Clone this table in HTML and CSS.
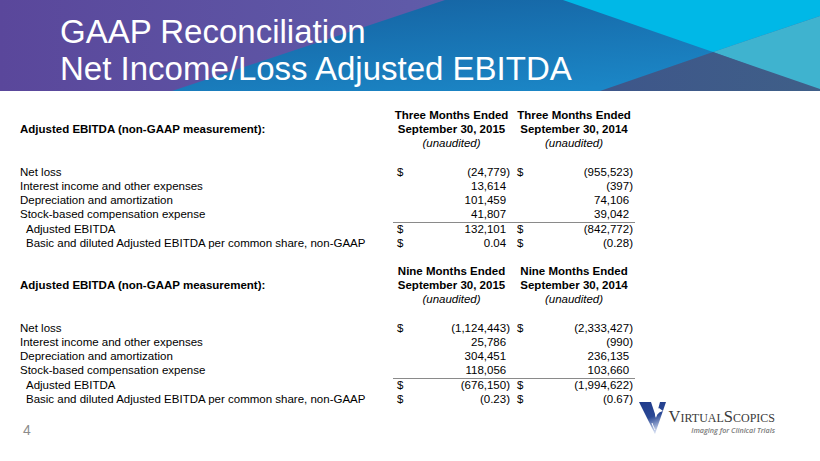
FILE: index.html
```html
<!DOCTYPE html>
<html lang="en">
<head>
<meta charset="utf-8">
<title>GAAP Reconciliation</title>
<link rel="stylesheet" href="styles.css">
</head>
<body>
<div class="slide">
  <header class="banner">
    <svg class="banner-bg" width="820" height="91" viewBox="0 0 820 91" preserveAspectRatio="none" aria-hidden="true">
      <defs>
        <linearGradient id="gPurple" x1="0" y1="0" x2="1" y2="0">
          <stop offset="0" stop-color="#5a479b"/>
          <stop offset="0.5" stop-color="#5f5aa8"/>
          <stop offset="1" stop-color="#6673b8"/>
        </linearGradient>
        <linearGradient id="gBlue" x1="0" y1="0" x2="0.6" y2="1">
          <stop offset="0" stop-color="#15609f"/>
          <stop offset="1" stop-color="#1b86c6"/>
        </linearGradient>
        <linearGradient id="gSlate" x1="0" y1="0" x2="1" y2="0">
          <stop offset="0" stop-color="#3e568a"/>
          <stop offset="1" stop-color="#3f5f88"/>
        </linearGradient>
      </defs>
      <rect x="0" y="0" width="820" height="91" fill="url(#gPurple)"/>
      <polygon points="445,0 820,0 820,91 172,91" fill="url(#gBlue)"/>
      <polygon points="563,0 820,0 820,16 713,52" fill="#00b8e7"/>
      <polygon points="713,52 820,16 820,91" fill="#3fb3cf"/>
      <polygon points="600,91 713,52 820,89 820,91" fill="url(#gSlate)"/>
    </svg>
    <h1 class="title">GAAP Reconciliation<br>Net Income/Loss Adjusted EBITDA</h1>
  </header>

  <main class="report">
    <div class="row">
      <span class="label"></span>
      <span class="colhead span1 b">Three Months Ended</span>
      <span class="colhead span2 b">Three Months Ended</span>
    </div>
    <div class="row">
      <span class="label b">Adjusted EBITDA (non-GAAP measurement):</span>
      <span class="colhead span1 b">September 30, 2015</span>
      <span class="colhead span2 b">September 30, 2014</span>
    </div>
    <div class="row">
      <span class="label"></span>
      <span class="colhead span1 i">(unaudited)</span>
      <span class="colhead span2 i">(unaudited)</span>
    </div>
    <div class="row blank"></div>
    <div class="row">
      <span class="label">Net loss</span>
      <span class="dol1">$</span><span class="val1">(24,779)</span>
      <span class="dol2">$</span><span class="val2">(955,523)</span>
    </div>
    <div class="row">
      <span class="label">Interest income and other expenses</span>
      <span class="dol1"></span><span class="val1 pos">13,614</span>
      <span class="dol2"></span><span class="val2">(397)</span>
    </div>
    <div class="row">
      <span class="label">Depreciation and amortization</span>
      <span class="dol1"></span><span class="val1 pos">101,459</span>
      <span class="dol2"></span><span class="val2 pos">74,106</span>
    </div>
    <div class="row rule">
      <span class="label">Stock-based compensation expense</span>
      <span class="dol1"></span><span class="val1 pos">41,807</span>
      <span class="dol2"></span><span class="val2 pos">39,042</span>
    </div>
    <div class="row">
      <span class="label indent">Adjusted EBITDA</span>
      <span class="dol1">$</span><span class="val1 pos">132,101</span>
      <span class="dol2">$</span><span class="val2">(842,772)</span>
    </div>
    <div class="row">
      <span class="label indent">Basic and diluted Adjusted EBITDA per common share, non-GAAP</span>
      <span class="dol1">$</span><span class="val1 pos">0.04</span>
      <span class="dol2">$</span><span class="val2">(0.28)</span>
    </div>
    <div class="row blank"></div>
    <div class="row">
      <span class="label"></span>
      <span class="colhead span1 b">Nine Months Ended</span>
      <span class="colhead span2 b">Nine Months Ended</span>
    </div>
    <div class="row">
      <span class="label b">Adjusted EBITDA (non-GAAP measurement):</span>
      <span class="colhead span1 b">September 30, 2015</span>
      <span class="colhead span2 b">September 30, 2014</span>
    </div>
    <div class="row">
      <span class="label"></span>
      <span class="colhead span1 i">(unaudited)</span>
      <span class="colhead span2 i">(unaudited)</span>
    </div>
    <div class="row blank"></div>
    <div class="row">
      <span class="label">Net loss</span>
      <span class="dol1">$</span><span class="val1">(1,124,443)</span>
      <span class="dol2">$</span><span class="val2">(2,333,427)</span>
    </div>
    <div class="row">
      <span class="label">Interest income and other expenses</span>
      <span class="dol1"></span><span class="val1 pos">25,786</span>
      <span class="dol2"></span><span class="val2">(990)</span>
    </div>
    <div class="row">
      <span class="label">Depreciation and amortization</span>
      <span class="dol1"></span><span class="val1 pos">304,451</span>
      <span class="dol2"></span><span class="val2 pos">236,135</span>
    </div>
    <div class="row rule">
      <span class="label">Stock-based compensation expense</span>
      <span class="dol1"></span><span class="val1 pos">118,056</span>
      <span class="dol2"></span><span class="val2 pos">103,660</span>
    </div>
    <div class="row">
      <span class="label indent">Adjusted EBITDA</span>
      <span class="dol1">$</span><span class="val1">(676,150)</span>
      <span class="dol2">$</span><span class="val2">(1,994,622)</span>
    </div>
    <div class="row">
      <span class="label indent">Basic and diluted Adjusted EBITDA per common share, non-GAAP</span>
      <span class="dol1">$</span><span class="val1">(0.23)</span>
      <span class="dol2">$</span><span class="val2">(0.67)</span>
    </div>
  </main>

  <footer class="footer">
    <span class="pageno">4</span>
    <div class="logo">
      <svg class="logo-mark" width="28" height="34" viewBox="0 0 28 34" aria-hidden="true">
        <defs>
          <linearGradient id="gV" x1="0" y1="0" x2="0.3" y2="1">
            <stop offset="0" stop-color="#1f3a8a"/>
            <stop offset="0.55" stop-color="#2a4895"/>
            <stop offset="1" stop-color="#c9d4ec"/>
          </linearGradient>
        </defs>
        <polygon points="0,1 12,1 17,16 21,1 27,1 16,33" fill="url(#gV)"/>
        <path d="M20,7 C16,9 15,13 17,17 C18,13 20,11 24,10 Z" fill="#ffffff"/>
        <path d="M13,22 C14,25 15,27 16,29" stroke="#ffffff" stroke-width="1" fill="none"/>
      </svg>
      <div class="logo-text">
        <span class="brand">Virtual<span class="brand2">Scopics</span></span>
        <span class="tagline">Imaging for Clinical Trials</span>
      </div>
    </div>
  </footer>
</div>
</body>
</html>
```

FILE: styles.css
```css
* { box-sizing: border-box; }

html, body {
  margin: 0;
  padding: 0;
  background: #ffffff;
}

.slide {
  width: 820px;
  height: 461px;
  overflow: hidden;
  display: flex;
  flex-direction: column;
  font-family: "Liberation Sans", Arial, sans-serif;
  color: #000000;
}

.banner {
  position: relative;
  height: 91px;
  flex: none;
}

.banner-bg {
  position: absolute;
  left: 0;
  top: 0;
  display: block;
}

.title {
  position: relative;
  margin: 0;
  padding: 13px 0 0 60px;
  font-family: "Liberation Sans", Arial, sans-serif;
  font-weight: normal;
  font-size: 33px;
  line-height: 37px;
  color: #ffffff;
}

.report {
  padding: 17px 0 0 20px;
  font-size: 11.5px;
  line-height: 14.2px;
  flex: none;
}

.row {
  display: grid;
  grid-template-columns: 373px 16px 101px 14px 111px;
  height: 14.2px;
  white-space: nowrap;
}

.label { grid-column: 1; }
.indent { padding-left: 6px; }

.colhead { text-align: center; }
.span1 { grid-column: 2 / span 2; }
.span2 { grid-column: 4 / span 2; padding-left: 3px; }

.dol1 { grid-column: 2; padding-left: 4px; }
.val1 { grid-column: 3; text-align: right; }
.dol2 { grid-column: 4; padding-left: 7px; }
.val2 { grid-column: 5; text-align: right; padding-right: 2px; }

.pos { padding-right: 0.333em; }
.val2.pos { padding-right: calc(0.333em + 2px); }

.rule .dol1, .rule .val1, .rule .dol2, .rule .val2 {
  border-bottom: 1px solid #8a8a8a;
}

.b { font-weight: bold; }
.i { font-style: italic; }

.footer {
  display: flex;
  justify-content: space-between;
  align-items: flex-start;
  margin-top: -5px;
  padding: 0 45px 0 23px;
}

.pageno {
  margin-top: 21px;
  font-size: 14px;
  color: #8c8c8c;
}

.logo {
  display: flex;
  align-items: flex-start;
  gap: 2px;
}

.logo-mark { display: block; }

.logo-text {
  display: flex;
  flex-direction: column;
  align-items: flex-end;
  padding-top: 8px;
}

.brand {
  font-family: "Liberation Serif", "Times New Roman", serif;
  font-variant: small-caps;
  font-size: 16.5px;
  line-height: 15px;
  color: #3a3a3a;
}

.tagline {
  margin-top: 2px;
  font-family: "Open Sans", sans-serif;
  font-style: italic;
  font-weight: 600;
  font-size: 7.2px;
  line-height: 9px;
  color: #7a7a7a;
}
```
